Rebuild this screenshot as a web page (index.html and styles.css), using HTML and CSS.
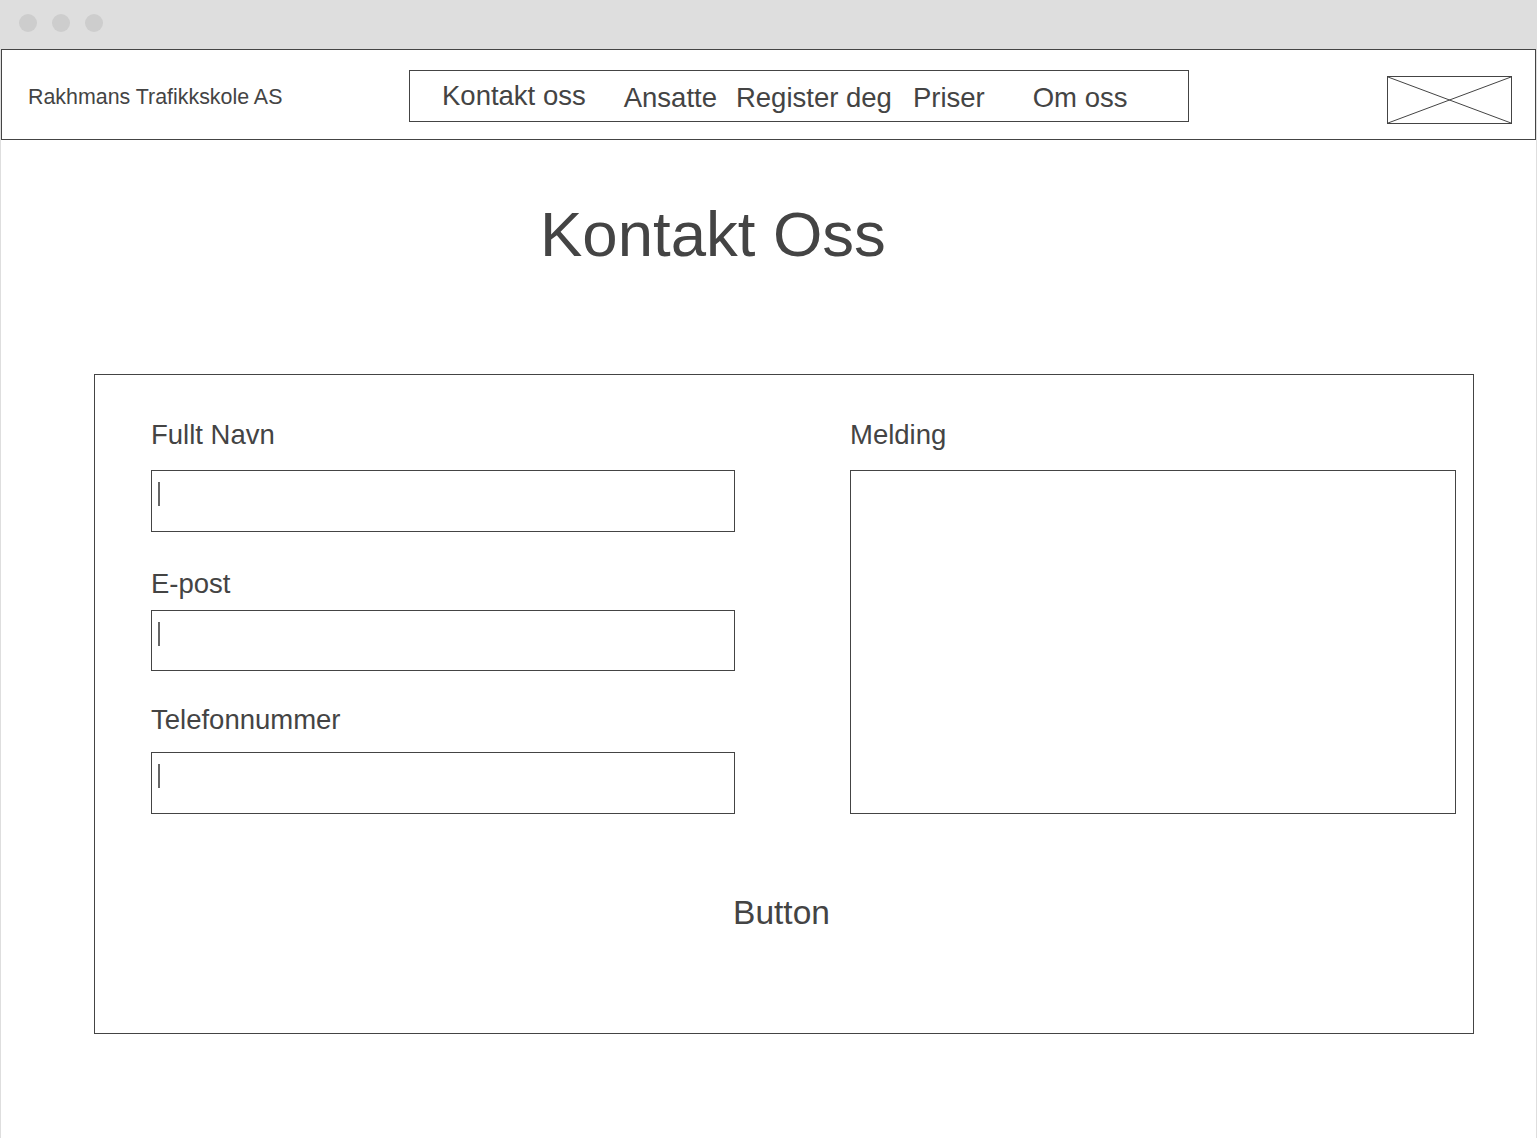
FILE: index.html
```html
<!DOCTYPE html>
<html lang="no">
<head>
<meta charset="utf-8">
<title>Kontakt Oss - Rakhmans Trafikkskole AS</title>
<link rel="stylesheet" href="styles.css">
</head>
<body>
<div class="window">
  <div class="titlebar">
    <span class="dot"></span><span class="dot"></span><span class="dot"></span>
  </div>
  <div class="frame">
    <header class="header">
      <div class="brand">Rakhmans Trafikkskole AS</div>
      <nav class="nav">
        <a class="nav-item nav-kontakt">Kontakt oss</a>
        <a class="nav-item nav-ansatte">Ansatte</a>
        <a class="nav-item nav-register">Register deg</a>
        <a class="nav-item nav-priser">Priser</a>
        <a class="nav-item nav-om">Om oss</a>
      </nav>
      <div class="logo">
        <svg width="125" height="48" viewBox="0 0 125 48" xmlns="http://www.w3.org/2000/svg">
          <rect x="0.5" y="0.5" width="124" height="47" fill="none" stroke="#444" stroke-width="1"/>
          <line x1="1" y1="1" x2="124" y2="47" stroke="#444" stroke-width="1"/>
          <line x1="1" y1="47" x2="124" y2="1" stroke="#444" stroke-width="1"/>
        </svg>
      </div>
    </header>
    <main class="main">
      <h1 class="title">Kontakt Oss</h1>
      <form class="form">
        <div class="columns">
          <div class="col-left">
            <label class="label">Fullt Navn</label>
            <div class="field f-name"><span class="caret"></span></div>
            <label class="label l-email">E-post</label>
            <div class="field f-email"><span class="caret"></span></div>
            <label class="label l-phone">Telefonnummer</label>
            <div class="field f-phone"><span class="caret"></span></div>
          </div>
          <div class="col-right">
            <label class="label">Melding</label>
            <div class="textarea"></div>
          </div>
        </div>
        <div class="button">Button</div>
      </form>
    </main>
  </div>
</div>
</body>
</html>
```
FILE: styles.css
```css
* { box-sizing: border-box; }
html, body { margin: 0; padding: 0; background: #fff; }
body { font-family: "Liberation Sans", Arial, sans-serif; color: #444; }

.window { width: 1537px; height: 1138px; display: flex; flex-direction: column; overflow: hidden; }

.titlebar {
  height: 49px; background: #dedede; display: flex; align-items: center;
  padding-left: 19px; gap: 15px; padding-bottom: 4px;
}
.dot { width: 18px; height: 18px; border-radius: 50%; background: #cdcdcd; display: block; }

.frame { flex: 1; border-left: 1px solid #dedede; border-right: 1px solid #dedede; background: #fff; }

.header {
  height: 91px; border: 1px solid #444; display: flex; align-items: flex-start;
}
.brand {
  width: 407px; padding-left: 26px; margin-top: 35px;
  font-size: 21.4px; line-height: 24px; color: #444; white-space: nowrap;
}
.nav {
  width: 780px; height: 52px; margin-top: 20px; border: 1px solid #444;
  display: flex; align-items: flex-start; padding-left: 32px;
}
.nav-item { font-size: 27.5px; line-height: 32px; color: #444; white-space: nowrap; margin-top: 11px; }
.nav-kontakt { margin-top: 9px; }
.nav-ansatte { margin-left: 38px; }
.nav-register { margin-left: 19px; }
.nav-priser { margin-left: 21px; }
.nav-om { margin-left: 48px; }

.logo { margin-left: auto; margin-right: 23px; margin-top: 26px; height: 48px; }
.logo svg { display: block; }

.main { padding-top: 58px; }
.title {
  margin: 0; padding-left: 539px; font-weight: normal; font-size: 63.5px; line-height: 72px; color: #444;
}

.form {
  margin: 104px 0 0 93px; width: 1380px; height: 660px; border: 1px solid #444;
  padding: 44px 17px 0 56px;
}
.columns { display: flex; gap: 115px; }
.col-left { width: 584px; display: flex; flex-direction: column; }
.col-right { width: 606px; display: flex; flex-direction: column; }

.label { display: block; font-size: 27.5px; line-height: 32px; color: #444; }
.field { border: 1px solid #444; height: 62px; margin-top: 19px; padding: 11px 0 0 6px; }
.l-email { margin-top: 36px; }
.f-email { margin-top: 10px; height: 61px; }
.l-phone { margin-top: 33px; }
.f-phone { margin-top: 16px; }
.caret { display: block; width: 2px; height: 24px; background: #666; }

.textarea { border: 1px solid #444; height: 344px; margin-top: 19px; }

.button {
  margin-top: 80px; text-align: center; font-size: 33.5px; line-height: 38px; color: #444;
  padding-right: 44px;
}
```
